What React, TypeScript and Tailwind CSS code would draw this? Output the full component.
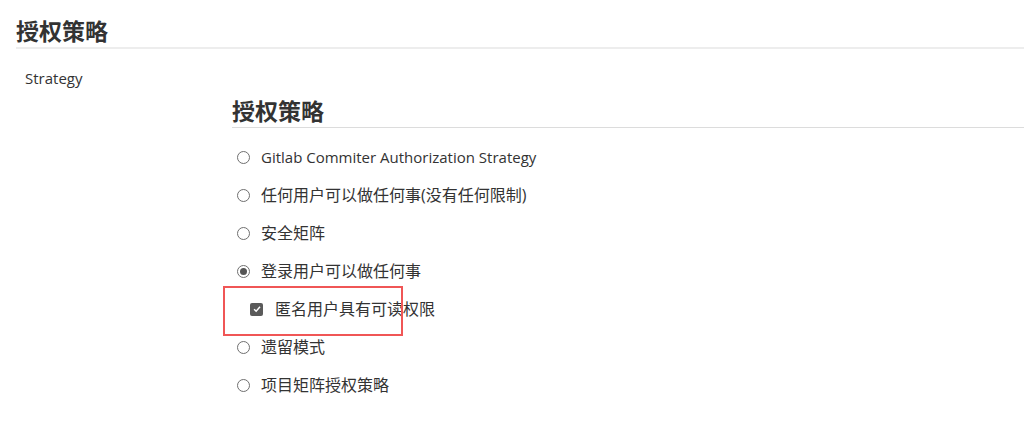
const cjk = "font-['Open_Sans','Noto_Sans_CJK_SC',sans-serif]";

const Radio = ({ checked }: { checked?: boolean }) => (
  <span className="flex h-[13px] w-[13px] shrink-0 items-center justify-center rounded-full border border-[#6f6f6f] bg-white">
    {checked && <span className="h-[7px] w-[7px] rounded-full bg-[#555]" />}
  </span>
);

const options = [
  { label: "Gitlab Commiter Authorization Strategy", latin: true },
  { label: "任何用户可以做任何事(没有任何限制)" },
  { label: "安全矩阵" },
  { label: "登录用户可以做任何事", checked: true },
];

const rest = [{ label: "遗留模式" }, { label: "项目矩阵授权策略" }];

const Option = ({ label, checked, latin }: { label: string; checked?: boolean; latin?: boolean }) => (
  <div className="flex h-[38px] items-center gap-[11px] pl-[5px]">
    <Radio checked={checked} />
    <span className={`${latin ? "text-[15px]" : "text-[16px]"} text-[#333]`}>{label}</span>
  </div>
);

export default function App() {
  return (
    <div className={`h-[433px] w-full overflow-hidden bg-white ${cjk}`}>
      <div className="pl-4 pt-[16px]">
        <h1 className="border-b-2 border-[#ededed] pb-[1px] text-[23px] font-bold leading-[30px] text-[#333]">
          授权策略
        </h1>
      </div>
      <div className="flex pt-[17px]">
        <div className="w-[232px] shrink-0 pl-[25px] pt-[2px] text-[15px] leading-5 text-[#333]">Strategy</div>
        <div className="flex-1 pt-[30px]">
          <h2 className="border-b border-[#dcdcdc] pb-[1px] text-[23px] font-bold leading-[30px] text-[#333]">
            授权策略
          </h2>
          <div className="pt-[10px]">
            {options.map((o) => (
              <Option key={o.label} {...o} />
            ))}
            <div className="relative flex h-[38px] items-center gap-[12px] pl-[18px]">
              <span className="flex h-[13px] w-[13px] items-center justify-center rounded-[2px] bg-[#5a5a5a]">
                <svg viewBox="0 0 12 12" className="h-[10px] w-[10px]">
                  <path d="M2.5 6.2 L5 8.6 L9.6 3.4" fill="none" stroke="#fff" strokeWidth="1.8" />
                </svg>
              </span>
              <span className="text-[16px] text-[#333]">匿名用户具有可读权限</span>
              <div className="pointer-events-none absolute left-[-9px] top-[-4px] h-[50px] w-[180px] border-2 border-[#f05656]" />
            </div>
            {rest.map((o) => (
              <Option key={o.label} {...o} />
            ))}
          </div>
        </div>
      </div>
    </div>
  );
}
